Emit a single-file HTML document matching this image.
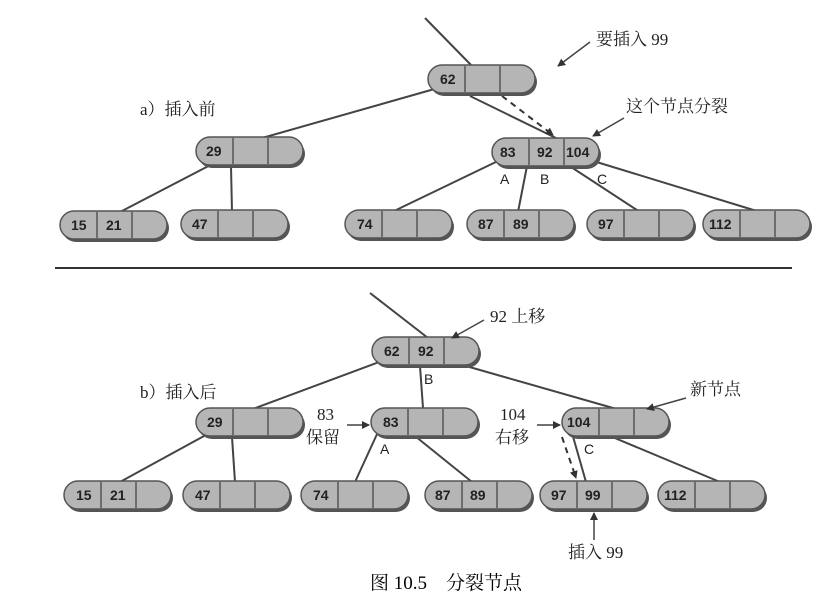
<!DOCTYPE html>
<html><head><meta charset="utf-8"><style>
html,body{margin:0;padding:0;background:#fff;}
svg{display:block}
.t{font-family:"Liberation Serif","Noto Serif CJK SC",serif;font-size:17px;fill:#222}
.n{font-family:"Liberation Sans",sans-serif;font-size:14px;fill:#222;font-weight:bold}
.l{stroke:#444;stroke-width:2;fill:none}
</style></head><body>
<svg width="837" height="616" viewBox="0 0 837 616" xmlns="http://www.w3.org/2000/svg">
<defs>
<marker id="ah" markerWidth="8" markerHeight="8" refX="7" refY="4" orient="auto" markerUnits="userSpaceOnUse"><path d="M0,0 L8,4 L0,8 z" fill="#333"/></marker>
<g id="node">
<rect x="2" y="3" width="107" height="28" rx="14" fill="#555"/>
<rect x="0" y="0" width="107" height="28" rx="14" fill="#b5b5b5" stroke="#555" stroke-width="1.5"/>
<line x1="37" y1="1" x2="37" y2="27" stroke="#555" stroke-width="1.5"/>
<line x1="72" y1="1" x2="72" y2="27" stroke="#555" stroke-width="1.5"/>
</g>
</defs>
<path class="l" d="M425,18 L472,66"/>
<path class="l" d="M438,88 L255,140"/>
<path class="l" d="M470,96 L560,140"/>
<path d="M502,96 L553,135" stroke="#333" stroke-width="2" stroke-dasharray="6,5" marker-end="url(#ah)"/>
<path class="l" d="M220,160 L120,212"/>
<path class="l" d="M231,166 L232,212"/>
<path class="l" d="M500,160 L392,212"/>
<path class="l" d="M527,166 L518,212"/>
<path class="l" d="M565,163 L640,212"/>
<path class="l" d="M590,160 L760,212"/>
<path class="l" d="M370,293 L428,338"/>
<path class="l" d="M390,358 L250,410"/>
<path class="l" d="M420,366 L423,408"/>
<path class="l" d="M452,362 L620,410"/>
<path class="l" d="M215,430 L120,482"/>
<path class="l" d="M232,437 L235,482"/>
<path class="l" d="M378,432 L355,482"/>
<path class="l" d="M410,432 L472,482"/>
<path d="M562,437 L576,478" stroke="#333" stroke-width="2" stroke-dasharray="6,5" marker-end="url(#ah)"/>
<path class="l" d="M572,433 L586,482"/>
<path class="l" d="M610,436 L720,482"/>
<line x1="55" y1="268" x2="792" y2="268" stroke="#333" stroke-width="2"/>
<use href="#node" x="428" y="65"/><text class="n" x="440" y="84">62</text>
<use href="#node" x="196" y="137"/><text class="n" x="206" y="156">29</text>
<use href="#node" x="492" y="138"/><text class="n" x="500" y="157">83</text><text class="n" x="537" y="157">92</text><text class="n" x="566" y="157">104</text>
<use href="#node" x="60" y="211"/><text class="n" x="71" y="230">15</text><text class="n" x="106" y="230">21</text>
<use href="#node" x="181" y="210"/><text class="n" x="192" y="229">47</text>
<use href="#node" x="345" y="210"/><text class="n" x="357" y="229">74</text>
<use href="#node" x="467" y="210"/><text class="n" x="478" y="229">87</text><text class="n" x="513" y="229">89</text>
<use href="#node" x="587" y="210"/><text class="n" x="598" y="229">97</text>
<use href="#node" x="703" y="210"/><text class="n" x="709" y="229">112</text>
<use href="#node" x="372" y="337"/><text class="n" x="384" y="356">62</text><text class="n" x="418" y="356">92</text>
<use href="#node" x="196" y="408"/><text class="n" x="207" y="427">29</text>
<use href="#node" x="371" y="408"/><text class="n" x="383" y="427">83</text>
<use href="#node" x="562" y="408"/><text class="n" x="567" y="427">104</text>
<use href="#node" x="64" y="481"/><text class="n" x="76" y="500">15</text><text class="n" x="110" y="500">21</text>
<use href="#node" x="183" y="481"/><text class="n" x="195" y="500">47</text>
<use href="#node" x="301" y="481"/><text class="n" x="313" y="500">74</text>
<use href="#node" x="425" y="481"/><text class="n" x="435" y="500">87</text><text class="n" x="470" y="500">89</text>
<use href="#node" x="540" y="481"/><text class="n" x="551" y="500">97</text><text class="n" x="585" y="500">99</text>
<use href="#node" x="658" y="481"/><text class="n" x="664" y="500">112</text>
<text class="n" x="500" y="184" style="font-weight:normal">A</text><text class="n" x="540" y="184" style="font-weight:normal">B</text><text class="n" x="597" y="184" style="font-weight:normal">C</text>
<text class="n" x="424" y="384" style="font-weight:normal">B</text><text class="n" x="380" y="454" style="font-weight:normal">A</text><text class="n" x="584" y="454" style="font-weight:normal">C</text>
<text class="t" x="596" y="45">要插入 99</text>
<path class="l" d="M590,42 L558,66" marker-end="url(#ah)" style="stroke-width:1.5"/>
<text class="t" x="626" y="112">这个节点分裂</text>
<path class="l" d="M624,118 L593,136" marker-end="url(#ah)" style="stroke-width:1.5"/>
<text class="t" x="140" y="115">a）插入前</text>
<text class="t" x="140" y="398">b）插入后</text>
<text class="t" x="490" y="322">92 上移</text>
<path class="l" d="M484,320 L452,338" marker-end="url(#ah)" style="stroke-width:1.5"/>
<text class="t" x="317" y="420">83</text><text class="t" x="306" y="443">保留</text>
<path class="l" d="M347,425 L369,425" marker-end="url(#ah)" style="stroke-width:1.5"/>
<text class="t" x="500" y="420">104</text><text class="t" x="495" y="443">右移</text>
<path class="l" d="M537,425 L560,425" marker-end="url(#ah)" style="stroke-width:1.5"/>
<text class="t" x="690" y="395">新节点</text>
<path class="l" d="M686,398 L647,409" marker-end="url(#ah)" style="stroke-width:1.5"/>
<path class="l" d="M594,540 L594,513" marker-end="url(#ah)" style="stroke-width:1.5"/>
<text class="t" x="568" y="558">插入 99</text>
<text class="t" x="370" y="589" style="font-size:19px;fill:#000">图 10.5　分裂节点</text>
</svg>
</body></html>
